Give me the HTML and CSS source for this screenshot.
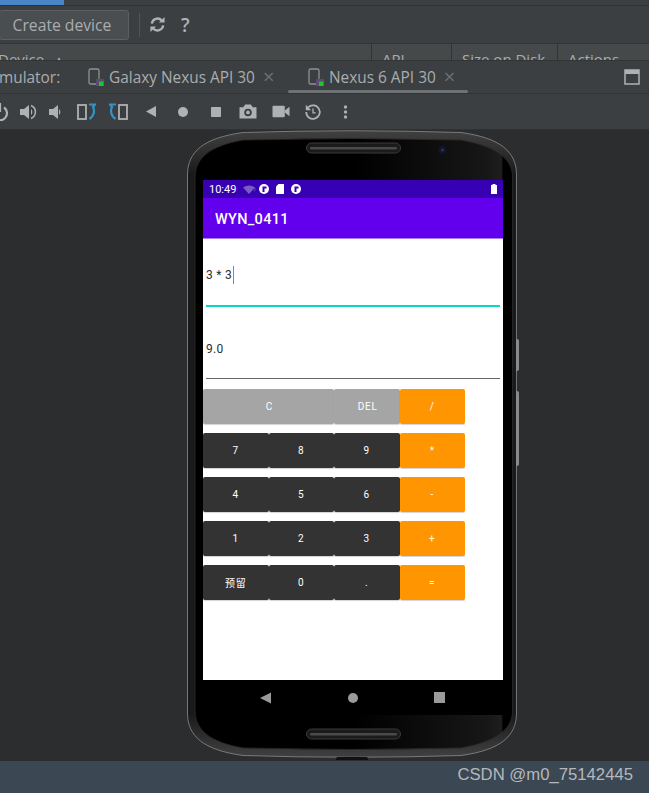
FILE: index.html
```html
<!DOCTYPE html>
<html lang="zh">
<head>
<meta charset="utf-8">
<title>Emulator</title>
<link rel="stylesheet" href="styles.css">
</head>
<body>
<div class="progress"><div class="progress-fill"></div></div>
<div class="manager-bar">
  <button class="create">Create device</button>
  <span class="vsep"></span>
  <svg class="ico-refresh" viewBox="0 0 18 18" width="17" height="17"><path d="M3 8a6 6 0 0 1 10.500-3.200M15 10a6 6 0 0 1-10.500 3.200" fill="none" stroke="#afb1b3" stroke-width="2.400"/><path d="M10.500 7h6V1zM7.500 11h-6v6z" fill="#afb1b3"/></svg>
  <span class="help">?</span>
</div>
<div class="table-head">
  <div class="th th-device">Device <span class="sort">▲</span></div>
  <div class="th th-api">API</div>
  <div class="th th-size">Size on Disk</div>
  <div class="th th-actions">Actions</div>
</div>
<div class="tabs">
  <span class="tabs-label">mulator:</span>
  <div class="tab tab-one">
    <svg class="tab-ico" viewBox="0 0 16 18" width="16" height="18"><rect x="1" y="1" width="10" height="15" rx="1.500" fill="none" stroke="#8e9194" stroke-width="1.300"/><rect x="8" y="11" width="8" height="7" fill="#5c4a75"/><rect x="11" y="13.500" width="4.500" height="4.500" fill="#19c82a"/></svg>
    <span>Galaxy Nexus API 30</span><span class="close">×</span>
  </div>
  <div class="tab tab-two">
    <svg class="tab-ico" viewBox="0 0 16 18" width="16" height="18"><rect x="1" y="1" width="10" height="15" rx="1.500" fill="none" stroke="#8e9194" stroke-width="1.300"/><rect x="8" y="11" width="8" height="7" fill="#5c4a75"/><rect x="11" y="13.500" width="4.500" height="4.500" fill="#19c82a"/></svg>
    <span>Nexus 6 API 30</span><span class="close">×</span>
    <span class="tab-underline"></span>
  </div>
  <svg class="win-ico" viewBox="0 0 16 16" width="16" height="16"><rect x="1" y="1" width="14" height="14" fill="none" stroke="#afb1b3" stroke-width="1.500"/><rect x="1" y="1" width="14" height="4" fill="#afb1b3"/></svg>
</div>
<div class="tools">
  <span class="cell c-power"><svg viewBox="0 0 24 18" width="24" height="18"><path d="M8 4.500a7 7 0 1 0 8 0M12 0v9" fill="none" stroke="#afb1b3" stroke-width="2.200"/></svg></span>
  <span class="cell c-up"><svg viewBox="0 0 18 18" width="18" height="18"><path d="M0 6h4l5-4v14l-5-4H0z" fill="#afb1b3"/><path d="M11 6a4 4 0 0 1 0 6z" fill="#afb1b3"/><path d="M11 2.500a7 7 0 0 1 0 13" fill="none" stroke="#afb1b3" stroke-width="1.500"/></svg></span>
  <span class="cell c-down"><svg viewBox="0 0 14 18" width="14" height="18"><path d="M0 6h4l5-4v14l-5-4H0z" fill="#afb1b3"/><path d="M10 6a4 4 0 0 1 0 6z" fill="#afb1b3"/></svg></span>
  <span class="cell"><svg viewBox="0 0 19 18" width="19" height="18"><rect x="1" y="2" width="8" height="14" fill="none" stroke="#afb1b3" stroke-width="1.800"/><path d="M12 1.500h6l-2 2.500c2 4 1 9-3.500 12" fill="none" stroke="#3592c4" stroke-width="2.200"/></svg></span>
  <span class="cell"><svg viewBox="0 0 19 18" width="19" height="18"><rect x="10" y="2" width="8" height="14" fill="none" stroke="#afb1b3" stroke-width="1.800"/><path d="M7 1.500H1l2 2.500c-2 4-1 9 3.500 12" fill="none" stroke="#3592c4" stroke-width="2.200"/></svg></span>
  <span class="cell"><svg viewBox="0 0 10 11" width="10" height="11"><path d="M10 0v11L0 5.500z" fill="#afb1b3"/></svg></span>
  <span class="cell"><svg viewBox="0 0 10 10" width="10" height="10"><circle cx="5" cy="5" r="5" fill="#afb1b3"/></svg></span>
  <span class="cell"><svg viewBox="0 0 10 10" width="10" height="10"><rect width="10" height="10" rx="1" fill="#afb1b3"/></svg></span>
  <span class="cell"><svg viewBox="0 0 19 18" width="18" height="17"><path d="M0.500 4.500h4l2-3h6l2 3h4v12h-18z" fill="#afb1b3"/><circle cx="9.500" cy="10" r="3" fill="none" stroke="#3c3f41" stroke-width="2"/></svg></span>
  <span class="cell"><svg viewBox="0 0 19 18" width="18" height="17"><rect x="0.500" y="3" width="13" height="12" rx="1" fill="#afb1b3"/><path d="M13.500 8l5-4v10l-5-4z" fill="#afb1b3"/></svg></span>
  <span class="cell"><svg viewBox="0 0 20 20" width="18" height="18"><path d="M4.500 5a7.500 7.500 0 1 1-2 5" fill="none" stroke="#afb1b3" stroke-width="2"/><path d="M2 2v6h6z" fill="#afb1b3"/><path d="M10 6v5h3" fill="none" stroke="#afb1b3" stroke-width="1.500"/></svg></span>
  <span class="cell"><svg viewBox="0 0 6 18" width="5" height="16"><circle cx="3" cy="3" r="2" fill="#afb1b3"/><circle cx="3" cy="9" r="2" fill="#afb1b3"/><circle cx="3" cy="15" r="2" fill="#afb1b3"/></svg></span>
</div>
<main class="canvas">
  <div class="phone">
    <svg class="frame" viewBox="0 0 330 628" width="330" height="628">
      <defs>
        <linearGradient id="ring" x1="0" y1="0" x2="0" y2="1"><stop offset="0" stop-color="#404040"/><stop offset="0.07" stop-color="#1a1a1a"/><stop offset="0.93" stop-color="#1a1a1a"/><stop offset="1" stop-color="#404040"/></linearGradient>
        <linearGradient id="glare" x1="0" y1="0" x2="1" y2="0"><stop offset="0.5" stop-color="#000"/><stop offset="0.92" stop-color="#171717"/><stop offset="0.965" stop-color="#1e1e1e"/><stop offset="0.97" stop-color="#000"/></linearGradient>
      </defs>
      <path d="M0.500 44C1 22 16 8 56 2.500Q165 -1 274 2.500C314 8 329 22 329.500 44V584C329 606 314 620 274 625.500Q165 629 56 625.500C16 620 1 606 0.500 584Z" fill="url(#ring)" stroke="#8a8a8a" stroke-width="0.800"/>
      <path d="M8 46C9 28 22 16 56 10Q165 7 274 10C308 16 325 28 325.500 46V582C325 600 308 612 274 618Q165 621 56 618C22 612 9 600 8 582Z" fill="url(#glare)" stroke="#2c2c2c" stroke-width="0.800"/>
      <rect x="119.500" y="13" width="94" height="10" rx="5" fill="#1b1b1b" stroke="#3a3a3a"/>
      <rect x="123" y="17" width="87" height="2.500" rx="1.200" fill="#4a4a4a"/>
      <rect x="119.500" y="599" width="94" height="10" rx="5" fill="#1b1b1b" stroke="#3a3a3a"/>
      <rect x="123" y="603" width="87" height="2.500" rx="1.200" fill="#4a4a4a"/>
      <circle cx="255.500" cy="20" r="4" fill="#12152a"/>
      <circle cx="255.500" cy="20" r="1.500" fill="#2c3358"/>
    </svg>
    <span class="side side-a"></span>
    <span class="side side-b"></span>
    <span class="notch"></span>
    <div class="screen">
      <div class="status">
        <span class="clock">10:49</span>
        <svg class="si si-wifi" viewBox="0 0 12 9" width="12" height="9"><path d="M0 2.500Q6 -1.500 12 2.500L6 9z" fill="#7a5bc8"/></svg>
        <span class="si-q">?</span>
        <svg class="si" viewBox="0 0 10 10" width="10" height="10"><circle cx="5" cy="5" r="5" fill="#fff"/><path d="M3.500 2.500h4v2H5.500V8H3.500z" fill="#3700b3"/></svg>
        <svg class="si" viewBox="0 0 8 10" width="8" height="10"><path d="M2.500 0H8v10H0V2.500z" fill="#fff"/></svg>
        <svg class="si" viewBox="0 0 10 10" width="10" height="10"><circle cx="5" cy="5" r="5" fill="#fff"/><path d="M3.500 2.500h4v2H5.500V8H3.500z" fill="#3700b3"/></svg>
        <svg class="si si-batt" viewBox="0 0 6 10" width="6" height="10"><path d="M1.500 0h3v1H6v9H0V1h1.500z" fill="#fff"/></svg>
      </div>
      <div class="appbar">WYN_0411</div>
      <div class="content">
        <div class="field field-input"><span>3 * 3</span><i class="caret"></i></div>
        <div class="field field-result"><span>9.0</span></div>
        <div class="keys">
          <button class="k gray wide">C</button>
          <button class="k gray">DEL</button>
          <button class="k orange">/</button>
          <button class="k dark">7</button>
          <button class="k dark">8</button>
          <button class="k dark">9</button>
          <button class="k orange">*</button>
          <button class="k dark">4</button>
          <button class="k dark">5</button>
          <button class="k dark">6</button>
          <button class="k orange">-</button>
          <button class="k dark">1</button>
          <button class="k dark">2</button>
          <button class="k dark">3</button>
          <button class="k orange">+</button>
          <button class="k dark">预留</button>
          <button class="k dark">0</button>
          <button class="k dark">.</button>
          <button class="k orange">=</button>
        </div>
      </div>
      <div class="navbar">
        <svg viewBox="0 0 12 12" width="12" height="12"><path d="M11 0.500v11L0 6z" fill="#9a9a9a"/></svg>
        <svg viewBox="0 0 10 10" width="10" height="10"><circle cx="5" cy="5" r="5" fill="#9a9a9a"/></svg>
        <svg viewBox="0 0 11 11" width="11" height="11"><rect width="11" height="11" fill="#9a9a9a"/></svg>
      </div>
    </div>
  </div>
</main>
<footer class="foot"><span class="mark">CSDN @m0_75142445</span></footer>
</body>
</html>
```
FILE: styles.css
```css
* { box-sizing: border-box; }
html, body { margin: 0; padding: 0; }
body {
  width: 649px;
  height: 793px;
  overflow: hidden;
  background: #3c3f41;
  font-family: "Open Sans", "Noto Sans", sans-serif;
  color: #a9adb0;
}
.progress { height: 5px; background: #3c3f41; }
.progress-fill { width: 64px; height: 5px; background: #4a86c7; }
.manager-bar {
  height: 39px;
  display: flex;
  align-items: center;
  border-top: 1px solid #2f3133;
  border-bottom: 1px solid #323436;
}
.create {
  width: 130px;
  height: 30px;
  margin-left: -1px;
  background: #4a4e50;
  border: 1px solid #5d6062;
  border-radius: 3px;
  color: #a9adb0;
  font: 15.700px "Open Sans", sans-serif;
  padding: 0 4px 0 0;
}
.vsep { width: 1px; height: 24px; background: #515456; margin-left: 10px; }
.ico-refresh { margin-left: 9px; }
.help { font: 600 19px "Open Sans", sans-serif; color: #afb1b3; margin-left: 15px; }
.table-head {
  height: 16px;
  display: flex;
  overflow: hidden;
  background: #45494a;
  font-size: 15px;
  line-height: 31px;
  color: #a9adb0;
}
.th { padding-left: 10px; border-right: 1px solid #323436; white-space: nowrap; }
.th-device { width: 383px; margin-left: -11px; padding-left: 9px; }
.sort { font-size: 10px; vertical-align: 2px; margin-left: 6px; }
.th-api { width: 80px; }
.th-size { width: 106px; }
.th-actions { flex: 1; border-right: 0; }
.tabs {
  height: 34px;
  display: flex;
  align-items: center;
  border-top: 1px solid #323436;
  border-bottom: 1px solid #323436;
  font-size: 15.400px;
  white-space: nowrap;
}
.tabs-label { width: 89px; margin-left: -1px; flex: none; }
.tab { display: flex; align-items: center; position: relative; height: 100%; }
.tab-one { width: 220px; }
.tab-two { width: 180px; }
.tab-ico { margin-right: 5px; }
.close { color: #6d7072; font-size: 20px; margin-left: 8px; line-height: 1; }
.tab-underline {
  position: absolute;
  left: -20px;
  top: 29px;
  width: 180px;
  height: 3px;
  border-radius: 2px;
  background: #6e7275;
}
.win-ico { margin-left: 136px; flex: none; }
.tools {
  height: 36px;
  display: flex;
  align-items: center;
  margin-left: -16px;
  border-bottom: 1px solid #2f3133;
}
.cell { flex: none; width: 32.400px; display: flex; justify-content: center; align-items: center; }
.c-power { width: 32px; }
.c-up { width: 25px; }
.c-down { width: 29px; }
.canvas {
  height: 631px;
  background: #2b2d2e;
  padding-left: 187px;
}
.phone { position: relative; width: 330px; height: 628px; padding: 50px 0 0 16px; }
.frame { position: absolute; left: 0; top: 0; }
.side { position: absolute; left: 329px; width: 3px; background: #8a8a8a; border-radius: 0 2px 2px 0; }
.side-a { top: 209px; height: 32px; }
.side-b { top: 261px; height: 75px; }
.notch { position: absolute; left: 149px; top: 627px; width: 32px; height: 3px; background: #111; border-radius: 2px 2px 0 0; }
.screen { position: relative; width: 300px; font-family: Roboto, sans-serif; }
.status {
  height: 18px;
  display: flex;
  align-items: center;
  background: #3700b3;
  color: #fff;
  padding: 0 6px;
  font-size: 11px;
}
.clock { width: 34px; }
.si { flex: none; margin-right: 7px; }
.si-wifi { margin-right: 0; }
.si-q { font-size: 6px; color: #7a5bc8; width: 6px; margin-left: -2px; }
.si-batt { margin: 0 0 0 auto; }
.appbar {
  height: 41px;
  background: #6200ee;
  color: #fff;
  font-size: 14.500px;
  font-weight: 500;
  letter-spacing: 0.300px;
  line-height: 43px;
  padding-left: 12px;
  border-bottom: 1px solid #a77cf3;
}
.content { height: 441px; background: #fff; padding: 0 3px; }
.field { font-size: 12px; color: #2e2e2e; letter-spacing: 0.300px; display: flex; align-items: center; border-bottom: 1px solid #666; }
.field-input { height: 68px; border-bottom: 2px solid #03dac5; padding-top: 6px; }
.field-result { height: 72px; padding-top: 12px; }
.caret { width: 1px; height: 18px; background: #00c4b4; margin-left: 1px; }
.keys {
  margin: 10px 0 0 -3px;
  display: grid;
  grid-template-columns: repeat(4, 65.500px);
  grid-auto-rows: 35px;
  row-gap: 9px;
}
.k {
  border: 0;
  border-radius: 2px;
  padding: 0;
  color: #fff;
  font: 400 10px Roboto, "Noto Sans CJK SC", sans-serif;
  letter-spacing: 0.800px;
  box-shadow: 0 1px 1px rgba(0,0,0,.18);
}
.wide { grid-column: span 2; }
.gray { background: #a5a5a5; padding-left: 2px; }
.dark { background: #333333; }
.orange { background: #ff9500; }
.navbar {
  height: 35px;
  background: #000;
  display: flex;
  align-items: center;
  padding-left: 57px;
  gap: 76px;
}
.foot {
  height: 33px;
  background: #3c4754;
  display: flex;
  justify-content: flex-end;
  align-items: center;
  padding-right: 16px;
}
.mark { font: 16.700px "Liberation Sans", sans-serif; color: #b4b8bc; padding-bottom: 5px; }
```
